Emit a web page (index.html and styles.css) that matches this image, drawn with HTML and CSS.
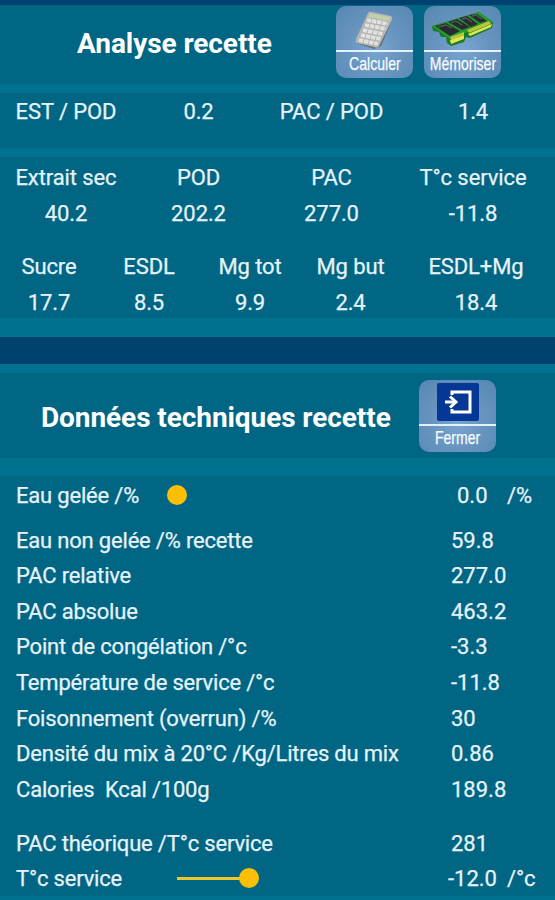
FILE: index.html
```
<!DOCTYPE html>
<html lang="fr">
<head>
  <meta charset="UTF-8" />
  <meta name="viewport" content="width=device-width, initial-scale=1.0" />
  <title>Analyse recette</title>
  <link rel="stylesheet" href="styles.css">
</head>
<body>

  <section class="analyse">
    <header class="header">
      <h1>Analyse recette</h1>
      <button class="btn" type="button">
        <svg class="btn-icon" viewBox="0 0 77 44">
          <path d="M20 37 L38 43 L45 40 L57 12 L54 16 L39 40 Z" fill="#686d70" />
          <path d="M32 7 Q33 5 36 6 L55 10 Q57 11 56 14 L43 40 Q41 43 38 41 L21 37 Q19 36 20 33 Z" fill="#b5b6b4" />
          <path d="M34 7 L54 11 L53 15 L32 11 Z" fill="#c3ceaa" />
          <g stroke="#e2e2e0" stroke-width="3.8" stroke-dasharray="4.2 1">
            <path d="M31 14 L52 18" />
            <path d="M29 19 L50 23" />
            <path d="M27 24 L47 28" />
            <path d="M25 29 L45 33" />
            <path d="M23 34 L42 38" />
          </g>
        </svg>
        <span class="btn-line"></span>
        <span class="btn-label">Calculer</span>
      </button>
      <button class="btn" type="button">
        <svg class="btn-icon" viewBox="0 0 77 44">
          <path d="M8 20 L55 6 L69 16 L68 22 L46 32 L42 31 L40 36 L27 40 L23 37 L22 31 L17 31 L15 26 L9 25 Z" fill="#187c22" />
          <path d="M8 20 L55 6 L69 16 L26 33 Z" fill="#299a2d" />
          <path d="M26 34 L40 29 L40 33 L27 38 Z M44 28 L68 18 L67 21 L46 30 Z" fill="#e3e457" />
          <path d="M26 31 L40 26 L40 29 L27 34 Z M43 24 L65 15 L67 18 L45 27 Z" fill="#b5c83a" />
          <g fill="#262c30">
            <path d="M11 20 L22 17 L36 25 L26 30 Z" />
            <path d="M24 16 L33 13 L46 21 L38 24 Z" />
            <path d="M35 12 L43 10 L54 18 L47 21 Z" />
            <path d="M45 9 L53 8 L63 15 L56 17 Z" />
          </g>
          <path d="M14 21 L22 19 L28 22 M27 17 L32 15 L38 19 M38 13 L42 12 L48 16 M48 10 L52 9 L58 13" fill="none" stroke="#525a5e" stroke-width="1.3" />
        </svg>
        <span class="btn-line"></span>
        <span class="btn-label">Mémoriser</span>
      </button>
    </header>

    <div class="stripe"></div>

    <div class="ratios grid-4">
      <span>EST / POD</span>
      <span>0.2</span>
      <span>PAC / POD</span>
      <span>1.4</span>
    </div>

    <div class="stripe"></div>

    <div class="results">
      <div class="grid-4">
        <span>Extrait sec</span>
        <span>POD</span>
        <span>PAC</span>
        <span>T°c service</span>
        <span>40.2</span>
        <span>202.2</span>
        <span>277.0</span>
        <span>-11.8</span>
      </div>
      <div class="grid-5">
        <span>Sucre</span>
        <span>ESDL</span>
        <span>Mg tot</span>
        <span>Mg but</span>
        <span>ESDL+Mg</span>
        <span>17.7</span>
        <span>8.5</span>
        <span>9.9</span>
        <span>2.4</span>
        <span>18.4</span>
      </div>
    </div>

    <div class="stripe stripe-large"></div>
  </section>

  <section class="technique">
    <div class="stripe"></div>

    <header class="header header-technique">
      <h2>Données techniques recette</h2>
      <button class="btn" type="button">
        <svg class="btn-icon" viewBox="0 0 77 44">
          <rect x="18" y="3" width="42" height="38" rx="2" fill="#043796" />
          <path d="M33 15 V12 H51 V32 H33 V29" fill="none" stroke="#fff" stroke-width="3" />
          <path d="M26 22 H37" stroke="#fff" stroke-width="3" />
          <path d="M31 16.5 L37 22 L31 27.5" fill="none" stroke="#fff" stroke-width="3" />
        </svg>
        <span class="btn-line"></span>
        <span class="btn-label">Fermer</span>
      </button>
    </header>

    <div class="stripe stripe-large"></div>

    <div class="data">
      <div class="row row-first">
        <span class="name">Eau gelée /%</span>
        <span class="slider"><span class="thumb"></span></span>
        <span class="value value-first">0.0</span>
        <span class="unit">/%</span>
      </div>
      <div class="row"><span class="name">Eau non gelée /% recette</span><span class="value">59.8</span></div>
      <div class="row"><span class="name">PAC relative</span><span class="value">277.0</span></div>
      <div class="row"><span class="name">PAC absolue</span><span class="value">463.2</span></div>
      <div class="row"><span class="name">Point de congélation /°c</span><span class="value">-3.3</span></div>
      <div class="row"><span class="name">Température de service /°c</span><span class="value">-11.8</span></div>
      <div class="row"><span class="name">Foisonnement (overrun) /%</span><span class="value">30</span></div>
      <div class="row"><span class="name">Densité du mix à 20°C /Kg/Litres du mix</span><span class="value">0.86</span></div>
      <div class="row"><span class="name">Calories&nbsp; Kcal /100g</span><span class="value">189.8</span></div>
      <div class="row row-gap"><span class="name">PAC théorique /T°c service</span><span class="value">281</span></div>
      <div class="row">
        <span class="name">T°c service</span>
        <span class="slider"><span class="track"></span><span class="thumb"></span></span>
        <span class="value value-last">-12.0</span>
        <span class="unit">/°c</span>
      </div>
    </div>
  </section>

</body>
</html>
```

FILE: styles.css
```
* {
  box-sizing: border-box;
  margin: 0;
  padding: 0;
}
body {
  font-family: Roboto, "Liberation Sans", sans-serif;
  font-size: 22px;
  line-height: 37px;
  letter-spacing: -0.1px;
  color: #e6f3fa;
  -webkit-text-stroke: 0.25px #e6f3fa;
  background-color: #00728f;
  height: 900px;
  overflow: hidden;
}
.analyse {
  border-top: 5px solid #00426f;
  border-bottom: 27px solid #00426f;
}
.stripe {
  height: 9px;
  background-color: #00728f;
}
.stripe-large {
  height: 19px;
}
.technique .stripe-large {
  height: 18px;
}
.header {
  display: flex;
  align-items: flex-start;
  height: 79px;
  padding-left: 77px;
  background-color: #006683;
}
.header h1,
.header h2 {
  width: 259px;
  font-size: 28px;
  font-weight: 700;
  line-height: 78px;
  letter-spacing: -0.08px;
  white-space: nowrap;
  color: #fff;
  -webkit-text-stroke: 0;
}
.header-technique {
  height: 85px;
  padding-top: 6px;
  padding-left: 41px;
}
.header-technique h2 {
  width: 378px;
}
.btn {
  display: flex;
  flex-direction: column;
  align-items: center;
  width: 77px;
  height: 72px;
  margin: 1px 11px 0 0;
  border: none;
  border-radius: 10px;
  overflow: hidden;
  background: radial-gradient(circle at 50% 60%, #78a6d0, #6795c0 45%, #5786b2);
  color: #fff;
}
.btn-icon {
  display: block;
  width: 77px;
  height: 44px;
  flex: none;
}
.btn-line {
  width: 100%;
  height: 2px;
  flex: none;
  background-color: #e4f0fa;
}
.btn-label {
  font-family: "Liberation Sans", sans-serif;
  font-size: 19px;
  line-height: 24px;
  letter-spacing: 0;
  white-space: nowrap;
  transform: scaleX(0.74);
}
.ratios {
  height: 55px;
  background-color: #006683;
}
.grid-4,
.grid-5 {
  display: grid;
  grid-template-columns: 132px 133px 133px 150px;
  grid-auto-rows: 35.6px;
  text-align: center;
}
.grid-5 {
  grid-template-columns: 98px 102px 100px 101px 150px;
  margin-top: 18px;
}
.results {
  height: 161px;
  padding-top: 2px;
  background-color: #006683;
}
.data {
  height: 420px;
  padding: 1px 0 0 16px;
  background-color: #006683;
}
.row {
  display: flex;
  height: 35.6px;
  white-space: nowrap;
}
.row-first {
  margin-bottom: 9px;
}
.row-gap {
  margin-top: 18.5px;
}
.name {
  width: 435px;
  letter-spacing: -0.19px;
}
.value {
  letter-spacing: 0;
}
.slider {
  display: flex;
  align-items: center;
  width: 264px;
}
.name:has(+ .slider) {
  width: 151px;
}
.track {
  width: 73px;
  height: 3px;
  margin: 0 -11px 0 10px;
  background-color: #f0c62c;
}
.thumb {
  width: 20px;
  height: 20px;
  border-radius: 50%;
  background-color: #fdbf05;
}
.value-first,
.value-last {
  width: 76px;
  padding-left: 26px;
}
.value-last {
  padding-left: 17px;
}
```
